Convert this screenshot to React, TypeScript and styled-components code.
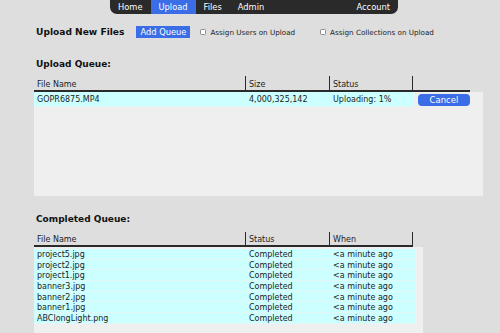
import React from "react";
import styled, { createGlobalStyle } from "styled-components";

const Global = createGlobalStyle`
  html, body { margin: 0; padding: 0; overflow: hidden; }
  body {
    background: #dedede;
    font-family: "DejaVu Sans", Verdana, sans-serif;
    color: #222;
  }
`;

const Page = styled.div`
  width: 500px;
  height: 333px;
  overflow: hidden;
`;

const Nav = styled.nav`
  margin-left: 110px;
  width: 288px;
  height: 14px;
  background: #2a2a2a;
  border-radius: 0 0 7px 7px;
  display: flex;
  overflow: hidden;
`;

const NavItem = styled.a<{ $active?: boolean; $push?: boolean }>`
  display: block;
  height: 14px;
  line-height: 14px;
  padding: 0 8px;
  font-size: 8.3px;
  color: #fff;
  background: ${(p) => (p.$active ? "#3a6de6" : "transparent")};
  margin-left: ${(p) => (p.$push ? "auto" : "0")};
  text-decoration: none;
`;

const Content = styled.div`
  margin-left: 34px;
`;

const Toolbar = styled.div`
  margin-top: 12px;
  height: 12px;
  display: flex;
  align-items: center;
`;

const PageTitle = styled.h1`
  margin: 0 0 0 2px;
  font-size: 9.1px;
  font-weight: bold;
  color: #111;
`;

const BlueButton = styled.button`
  margin: 0 0 0 12px;
  width: 54px;
  height: 12px;
  padding: 0;
  border: none;
  background: #3a6de6;
  color: #fff;
  font-family: inherit;
  font-size: 8.3px;
  line-height: 12px;
`;

const CheckLabel = styled.label<{ $gap: number }>`
  display: flex;
  align-items: center;
  margin-left: ${(p) => p.$gap}px;
  font-size: 7.2px;
  color: #222;
`;

const Check = styled.input`
  appearance: none;
  width: 6px;
  height: 6px;
  margin: 0 4px 0 0;
  border: 1px solid #8a8a8a;
  border-radius: 1.5px;
  background: #fff;
  box-sizing: border-box;
`;

const SectionTitle = styled.h2<{ $top: number }>`
  margin: ${(p) => p.$top}px 0 0 2px;
  height: 10px;
  line-height: 10px;
  font-size: 9px;
  font-weight: bold;
  color: #111;
`;

const HeaderRow = styled.div<{ $cols: string; $top: number; $h: number }>`
  margin-top: ${(p) => p.$top}px;
  display: grid;
  grid-template-columns: ${(p) => p.$cols};
  height: ${(p) => p.$h}px;
`;

const HeaderCell = styled.div<{ $noRight?: boolean }>`
  border-bottom: 2px solid #2a2a2a;
  border-right: ${(p) => (p.$noRight ? "none" : "1px solid #2a2a2a")};
  font-size: 8px;
  padding-left: 3px;
  display: flex;
  align-items: center;
  padding-top: 2px;
  color: #222;
`;

const Panel = styled.div<{ $w: number; $h: number }>`
  width: ${(p) => p.$w}px;
  height: ${(p) => p.$h}px;
  background: #efefef;
`;

const Row = styled.div<{ $cols: string; $h: number }>`
  display: grid;
  grid-template-columns: ${(p) => p.$cols};
  height: ${(p) => p.$h}px;
  align-items: stretch;
`;

const Cell = styled.div`
  background: #ccffff;
  font-size: 8px;
  padding-left: 3px;
  display: flex;
  align-items: center;
  white-space: nowrap;
  color: #222;
  box-shadow: inset 0 -1px 0 #e2f6f6;
`;

const ActionCell = styled.div`
  display: flex;
  align-items: center;
  padding-left: 5px;
`;

const CancelButton = styled.button`
  width: 52px;
  height: 12px;
  padding: 0;
  border: none;
  border-radius: 4px;
  background: #3a6de6;
  color: #fff;
  font-family: inherit;
  font-size: 8.5px;
  line-height: 12px;
`;

const uploadCols = "212px 84px 83px 57px";
const doneHeadCols = "212px 84px 83px";
const doneRowCols = "212px 84px 86px";

const completed = [
  "project5.jpg",
  "project2.jpg",
  "project1.jpg",
  "banner3.jpg",
  "banner2.jpg",
  "banner1.jpg",
  "ABClongLight.png",
];

export default function App() {
  return (
    <Page>
      <Global />
      <Nav>
        <NavItem>Home</NavItem>
        <NavItem $active>Upload</NavItem>
        <NavItem>Files</NavItem>
        <NavItem>Admin</NavItem>
        <NavItem $push>Account</NavItem>
      </Nav>
      <Content>
        <Toolbar>
          <PageTitle>Upload New Files</PageTitle>
          <BlueButton>Add Queue</BlueButton>
          <CheckLabel $gap={10}>
            <Check type="checkbox" />
            Assign Users on Upload
          </CheckLabel>
          <CheckLabel $gap={25}>
            <Check type="checkbox" />
            Assign Collections on Upload
          </CheckLabel>
        </Toolbar>

        <SectionTitle $top={21}>Upload Queue:</SectionTitle>
        <HeaderRow $cols={uploadCols} $top={7} $h={16}>
          <HeaderCell>File Name</HeaderCell>
          <HeaderCell>Size</HeaderCell>
          <HeaderCell>Status</HeaderCell>
          <HeaderCell $noRight />
        </HeaderRow>
        <Panel $w={449} $h={104}>
          <Row $cols={uploadCols} $h={15}>
            <Cell>GOPR6875.MP4</Cell>
            <Cell>4,000,325,142</Cell>
            <Cell>Uploading: 1%</Cell>
            <ActionCell>
              <CancelButton>Cancel</CancelButton>
            </ActionCell>
          </Row>
        </Panel>

        <SectionTitle $top={18}>Completed Queue:</SectionTitle>
        <HeaderRow $cols={doneHeadCols} $top={8} $h={15}>
          <HeaderCell>File Name</HeaderCell>
          <HeaderCell>Status</HeaderCell>
          <HeaderCell>When</HeaderCell>
        </HeaderRow>
        <Panel $w={389} $h={100}>
          <div style={{ height: 2 }} />
          {completed.map((name) => (
            <Row key={name} $cols={doneRowCols} $h={10.7}>
              <Cell>{name}</Cell>
              <Cell>Completed</Cell>
              <Cell>&lt;a minute ago</Cell>
            </Row>
          ))}
        </Panel>
      </Content>
    </Page>
  );
}
